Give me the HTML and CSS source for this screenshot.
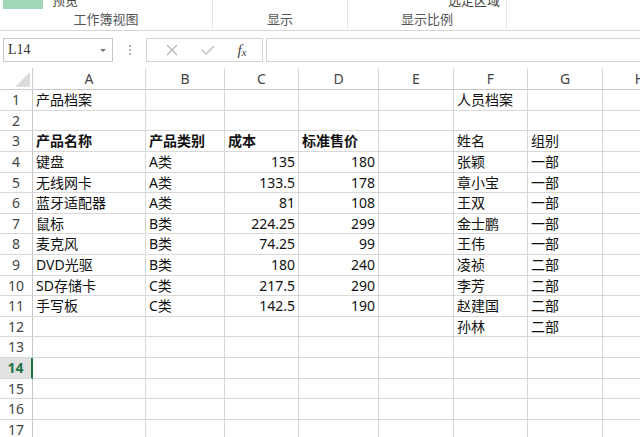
FILE: index.html
```html
<!DOCTYPE html>
<html lang="zh-CN">
<head>
    <meta charset="UTF-8">
    <title>工作簿</title>
    <link rel="stylesheet" href="styles.css">
</head>
<body>

    <!-- Ribbon (scrolled, only the group labels show) -->
    <div class="ribbon">
        <div class="group group-view">
            <div class="group-body">
                <span class="preview-icon"></span>
                <span class="ribbon-text">预览</span>
            </div>
            <div class="group-label">工作簿视图</div>
        </div>
        <div class="group group-show">
            <div class="group-body"></div>
            <div class="group-label">显示</div>
        </div>
        <div class="group group-zoom">
            <div class="group-body right">
                <span class="ribbon-text">选定区域</span>
            </div>
            <div class="group-label">显示比例</div>
        </div>
    </div>

    <!-- Formula bar -->
    <div class="formula-bar">
        <div class="name-box">
            <span>L14</span>
            <span class="caret"></span>
        </div>
        <div class="grip">
            <svg width="4" height="12" viewBox="0 0 4 12">
                <circle cx="2" cy="2" r="1" fill="#9a9a9a"/>
                <circle cx="2" cy="6" r="1" fill="#9a9a9a"/>
                <circle cx="2" cy="10" r="1" fill="#9a9a9a"/>
            </svg>
        </div>
        <div class="fx-buttons">
            <svg class="btn-icon" width="12" height="12" viewBox="0 0 12 12">
                <path d="M1 1 L11 11 M11 1 L1 11" stroke="#b4b4b4" stroke-width="1.2" fill="none"/>
            </svg>
            <svg class="btn-icon" width="14" height="10" viewBox="0 0 14 10">
                <path d="M1 5 L5 9 L13 1" stroke="#c4c4c4" stroke-width="1.6" fill="none"/>
            </svg>
            <span class="fx">f<sub>x</sub></span>
        </div>
        <div class="formula-input"></div>
    </div>

    <!-- Sheet -->
    <div class="sheet-wrap">
        <div class="sheet" id="sheet"></div>
    </div>

    <script>
        const columns = ["A", "B", "C", "D", "E", "F", "G", "H"];

        // each row: [A, B, C, D, E, F, G, H]
        const rows = [
            ["产品档案", "", "", "", "", "人员档案", "", ""],
            ["", "", "", "", "", "", "", ""],
            ["产品名称", "产品类别", "成本", "标准售价", "", "姓名", "组别", ""],
            ["键盘", "A类", 135, 180, "", "张颖", "一部", ""],
            ["无线网卡", "A类", 133.5, 178, "", "章小宝", "一部", ""],
            ["蓝牙适配器", "A类", 81, 108, "", "王双", "一部", ""],
            ["鼠标", "B类", 224.25, 299, "", "金士鹏", "一部", ""],
            ["麦克风", "B类", 74.25, 99, "", "王伟", "一部", ""],
            ["DVD光驱", "B类", 180, 240, "", "凌祯", "二部", ""],
            ["SD存储卡", "C类", 217.5, 290, "", "李芳", "二部", ""],
            ["手写板", "C类", 142.5, 190, "", "赵建国", "二部", ""],
            ["", "", "", "", "", "孙林", "二部", ""]
        ];
        const totalRows = 17;
        const activeRow = 14;

        let sheet = document.getElementById("sheet");

        function addCell(text, className) {
            let cell = document.createElement("div");
            cell.className = className;
            cell.innerText = text;
            sheet.appendChild(cell);
            return cell;
        }

        // header row
        let corner = addCell("", "corner");
        corner.appendChild(document.createElement("span")).className = "corner-mark";
        columns.forEach(function (col) {
            addCell(col, "col-head");
        });

        for (let r = 1; r <= totalRows; r++) {
            addCell(r, r === activeRow ? "row-head active" : "row-head");
            let data = rows[r - 1] || [];
            for (let c = 0; c < columns.length; c++) {
                let value = data[c] === undefined ? "" : data[c];
                let cls = "cell";
                if (typeof value === "number") cls += " num";
                if (r === 3 && c < 4) cls += " bold";
                addCell(value, cls);
            }
        }
    </script>

</body>
</html>
```

FILE: styles.css
```css
* {
    margin: 0;
    padding: 0;
    box-sizing: border-box;
}
body {
    background: #fff;
    font-family: "Noto Sans", "Noto Sans CJK SC", sans-serif;
    overflow: hidden;
}

/* ribbon */
.ribbon {
    display: flex;
    height: 31px;
    border-bottom: 1px solid #d6d6d6;
    overflow: hidden;
}
.group {
    display: flex;
    flex-direction: column;
    justify-content: space-between;
    border-right: 1px solid #e4e4e4;
    height: 28px;
}
.group-view {
    width: 213px;
}
.group-show {
    width: 135px;
}
.group-zoom {
    width: 159px;
}
.group-body {
    display: flex;
    align-items: flex-end;
    height: 9px;
}
.group-body.right {
    justify-content: flex-end;
    padding-right: 6px;
}
.preview-icon {
    width: 40px;
    height: 9px;
    margin-left: 3px;
    background: #a2d6b8;
}
.ribbon-text {
    font-family: "Noto Sans CJK SC", sans-serif;
    font-size: 13px;
    line-height: 14px;
    color: #444;
    margin-left: 9px;
    margin-bottom: 2px;
}
.group-label {
    font-family: "Noto Sans CJK SC", sans-serif;
    font-size: 13px;
    line-height: 18px;
    color: #555;
    text-align: center;
}

/* formula bar */
.formula-bar {
    display: flex;
    align-items: center;
    height: 37px;
    padding: 7px 0 6px 3px;
}
.name-box {
    display: flex;
    align-items: center;
    justify-content: space-between;
    width: 110px;
    height: 24px;
    border: 1px solid #c8c8c8;
    padding: 0 6px 0 4px;
    font-family: "Liberation Serif", serif;
    font-size: 14px;
    color: #333;
}
.caret {
    border-left: 3px solid transparent;
    border-right: 3px solid transparent;
    border-top: 3px solid #777;
}
.grip {
    display: flex;
    align-items: center;
    width: 33px;
    justify-content: center;
}
.fx-buttons {
    display: flex;
    align-items: center;
    justify-content: space-around;
    width: 117px;
    height: 24px;
    border: 1px solid #d4d4d4;
    padding: 0 4px 0 8px;
}
.fx {
    font-family: "Liberation Serif", serif;
    font-style: italic;
    font-size: 15px;
    color: #444;
}
.fx sub {
    font-size: 11px;
    vertical-align: -1px;
}
.formula-input {
    flex: 1;
    height: 24px;
    margin-left: 3px;
    margin-right: -2px;
    border: 1px solid #d4d4d4;
}

/* sheet */
.sheet-wrap {
    overflow: hidden;
    width: 640px;
}
.sheet {
    display: grid;
    grid-template-columns: 33px 113px 79px 74px 80px 75px 74px 75px 75px;
    grid-template-rows: 22px repeat(3, 21px 20px 21px 21px 20px) 21px 20px;
    width: 678px;
    font-size: 14px;
}
.sheet > div {
    border-right: 1px solid #d8d8d8;
    border-bottom: 1px solid #d8d8d8;
    white-space: nowrap;
    overflow: hidden;
}
.corner {
    display: flex;
    justify-content: flex-end;
    align-items: flex-end;
    padding: 0 2px 2px 0;
    border-color: #cfcfcf !important;
}
.corner-mark {
    width: 0;
    height: 0;
    border-left: 15px solid transparent;
    border-bottom: 15px solid #dcdcdc;
}
.col-head {
    text-align: center;
    line-height: 21px;
    color: #444;
    border-bottom-color: #c8c8c8 !important;
}
.row-head {
    text-align: center;
    line-height: 20px;
    color: #444;
    border-right-color: #c8c8c8 !important;
}
.row-head.active {
    background: #e1e1e1;
    color: #217346;
    font-weight: bold;
    border-right: 2px solid #217346 !important;
}
.cell {
    padding: 0 3px;
    line-height: 20px;
    color: #111;
}
.cell.num {
    text-align: right;
}
.cell.bold {
    font-weight: bold;
}
```
